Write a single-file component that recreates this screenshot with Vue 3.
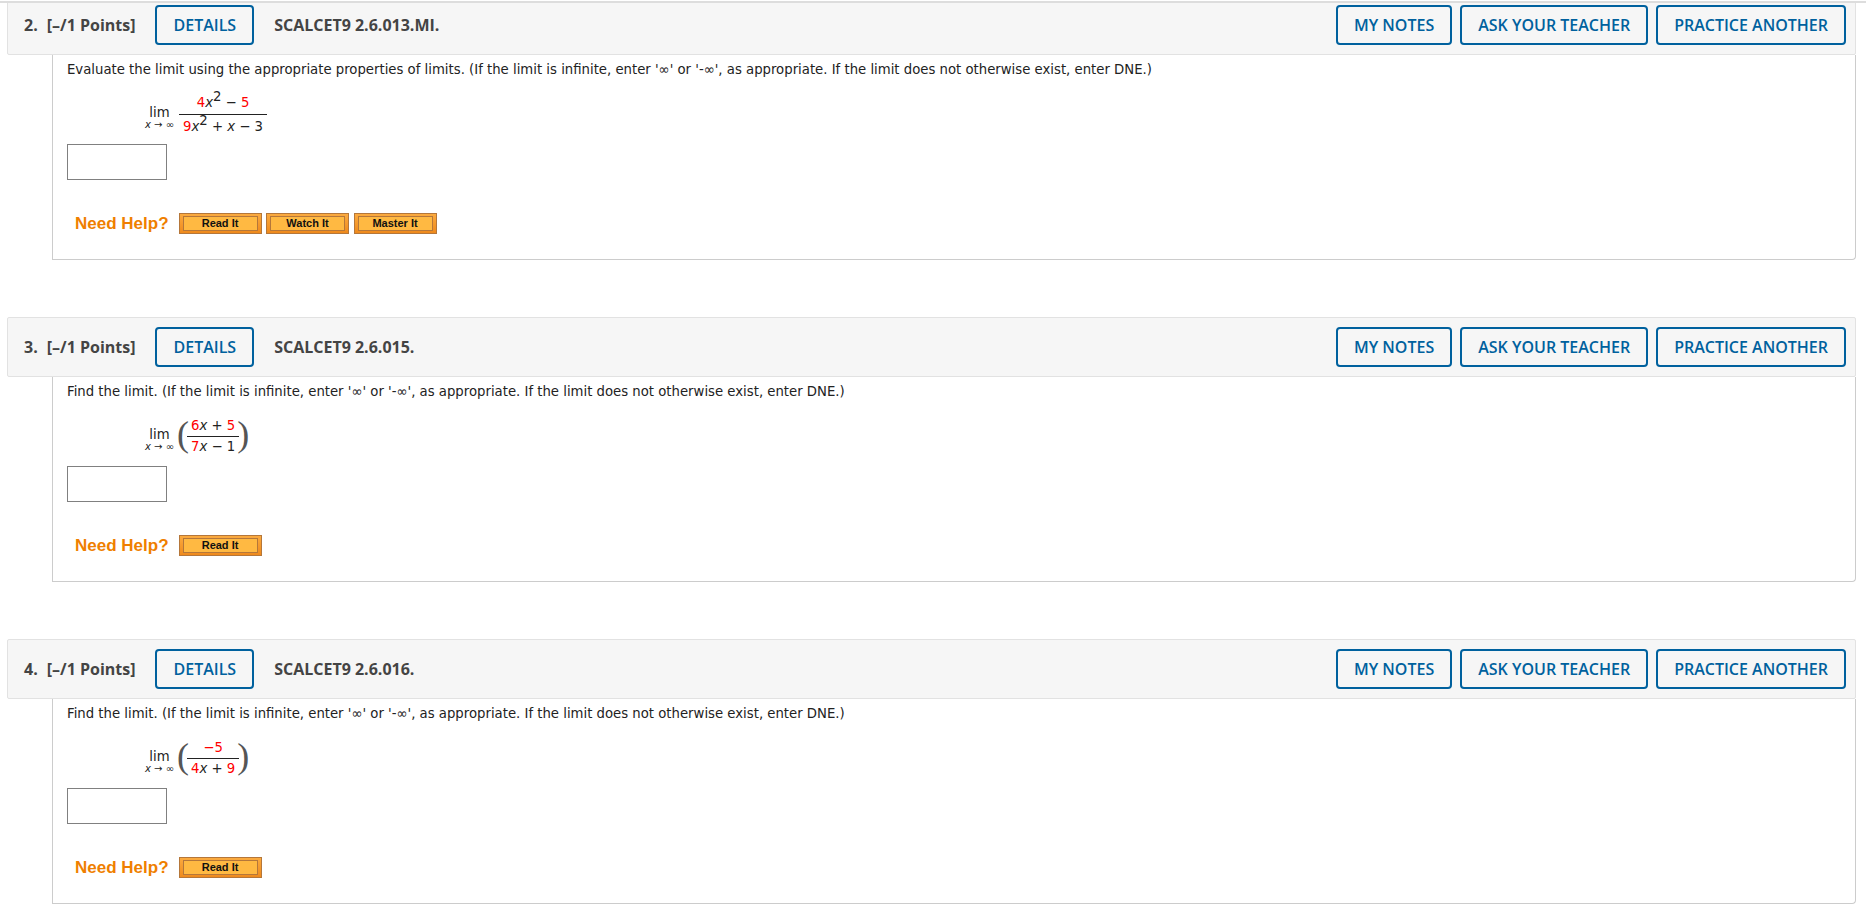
<template>
  <div class="page">
    <div class="scroller">
      <section v-for="q in questions" :key="q.num" class="question">
        <header class="q-head">
          <span class="q-num">{{ q.num }}.</span>
          <span class="q-points">[–/1 Points]</span>
          <button class="outline details">DETAILS</button>
          <span class="q-code">{{ q.code }}</span>
          <div class="q-actions">
            <button class="outline">MY NOTES</button>
            <button class="outline">ASK YOUR TEACHER</button>
            <button class="outline">PRACTICE ANOTHER</button>
          </div>
        </header>
        <div class="q-body">
          <p class="prompt">{{ q.prompt }}</p>
          <div class="math">
            <div class="lim">
              <span class="lim-word">lim</span>
              <span class="lim-sub"><i>x</i> → ∞</span>
            </div>
            <span v-if="q.parens" class="paren">(</span>
            <div class="frac" :class="{ wide: !q.parens }">
              <div class="top">
                <template v-for="(t, i) in q.top" :key="i">
                  <sup v-if="t.sup">{{ t.text }}</sup>
                  <i v-else-if="t.it">{{ t.text }}</i>
                  <span v-else :class="{ red: t.red }">{{ t.text }}</span>
                </template>
              </div>
              <div class="bottom">
                <template v-for="(t, i) in q.bottom" :key="i">
                  <sup v-if="t.sup">{{ t.text }}</sup>
                  <i v-else-if="t.it">{{ t.text }}</i>
                  <span v-else :class="{ red: t.red }">{{ t.text }}</span>
                </template>
              </div>
            </div>
            <span v-if="q.parens" class="paren">)</span>
          </div>
          <input class="answer" type="text" />
          <div class="help">
            <span class="help-label">Need Help?</span>
            <a v-for="h in q.help" :key="h" class="help-btn"><span>{{ h }}</span></a>
          </div>
        </div>
      </section>
    </div>
  </div>
</template>

<script setup>
const infNote = "(If the limit is infinite, enter '∞' or '-∞', as appropriate. If the limit does not otherwise exist, enter DNE.)"

const r = (text) => ({ text, red: true })
const n = (text) => ({ text })
const x = { text: 'x', it: true }
const sq = { text: '2', sup: true }

const questions = [
  {
    num: 2,
    code: 'SCALCET9 2.6.013.MI.',
    prompt: 'Evaluate the limit using the appropriate properties of limits. ' + infNote,
    parens: false,
    top: [r('4'), x, sq, n(' − '), r('5')],
    bottom: [r('9'), x, sq, n(' + '), x, n(' − 3')],
    help: ['Read It', 'Watch It', 'Master It']
  },
  {
    num: 3,
    code: 'SCALCET9 2.6.015.',
    prompt: 'Find the limit. ' + infNote,
    parens: true,
    top: [r('6'), x, n(' + '), r('5')],
    bottom: [r('7'), x, n(' − 1')],
    help: ['Read It']
  },
  {
    num: 4,
    code: 'SCALCET9 2.6.016.',
    prompt: 'Find the limit. ' + infNote,
    parens: true,
    top: [r('−5')],
    bottom: [r('4'), x, n(' + '), r('9')],
    help: ['Read It']
  }
]
</script>

<style>
html, body { margin: 0; background: #fff; overflow: hidden; }
</style>

<style scoped>
.page { padding-top: 1px; }
.scroller {
  height: 901px;
  overflow: hidden;
  border-top: 2px solid #ddd;
}
.question { margin-bottom: 57px; }
.question:first-child { margin-top: -8px; }
.q-head {
  display: flex;
  align-items: center;
  height: 60px;
  margin: 0 10px 0 7px;
  padding: 0 9px 0 16px;
  background: #f6f6f6;
  border: 1px solid #e2e2e2;
  border-radius: 2px;
  box-sizing: border-box;
  font-family: "Open Sans", sans-serif;
  font-size: 16px;
  color: #444;
}
.q-num { font-weight: 700; margin-right: 9px; }
.q-points { font-weight: 700; margin-right: 20px; }
.q-code { font-weight: 700; margin-left: 20px; }
.q-actions { margin-left: auto; display: flex; gap: 8px; }
.outline {
  height: 40px;
  padding: 0 16px;
  background: transparent;
  border: 2px solid #00619e;
  border-radius: 4px;
  color: #00619e;
  font-family: "Open Sans", sans-serif;
  font-size: 16px;
  font-weight: 600;
}
.q-body {
  margin: 0 10px 0 52px;
  height: 205px;
  padding: 0 0 0 14px;
  border: 1px solid #ccc;
  border-top: 0;
  border-radius: 0 0 4px 0;
  box-sizing: border-box;
  font-family: "DejaVu Sans", Verdana, sans-serif;
  font-size: 13.25px;
  color: #222;
}
.prompt { margin: 0; padding-top: 7px; line-height: 16px; }
.math {
  display: flex;
  align-items: center;
  margin: 12px 0 0 78px;
  height: 48px;
}
.lim {
  display: flex;
  flex-direction: column;
  align-items: center;
  margin: 9px 5px 0 0;
}
.lim-word { line-height: 12px; }
.lim-sub { font-size: 10px; line-height: 12px; }
.frac { text-align: center; }
.top { padding: 0 4px 1px; border-bottom: 1px solid #222; line-height: 18px; white-space: pre; }
.bottom { padding: 1px 4px 0; line-height: 18px; white-space: pre; }
.frac.wide { min-width: 84px; margin-top: 2px; }
.frac.wide .top { padding-bottom: 2px; }
.frac.wide .bottom { padding-top: 3px; }
.red { color: #f00; }
.paren {
  font-family: "Liberation Serif", serif;
  font-size: 36px;
  line-height: 44px;
  color: #555;
  margin: -4px -2px 0;
}
sup { font-size: 13.25px; line-height: 0; vertical-align: 6px; }
.answer {
  display: block;
  width: 100px;
  height: 36px;
  margin-top: 6px;
  padding: 0;
  border: 1px solid #808080;
  box-sizing: border-box;
  background: #fff;
}
.help { display: flex; align-items: center; margin: 33px 0 0 8px; }
.help-label {
  font-family: "Liberation Sans", Arial, sans-serif;
  font-size: 17px;
  font-weight: 700;
  line-height: 21px;
  color: #ef7f00;
  margin-right: 10px;
}
.help-btn {
  display: block;
  width: 83px;
  height: 21px;
  margin-right: 4.5px;
  padding: 2px 3px;
  box-sizing: border-box;
  background: linear-gradient(#fbaa3f, #ef8a1c);
  border: 1px solid #b5773a;
}
.help-btn span {
  display: block;
  height: 100%;
  box-sizing: border-box;
  border: 1px solid #b5773a;
  background: #ffb942;
  text-align: center;
  font-family: "Liberation Sans", Arial, sans-serif;
  font-size: 11px;
  font-weight: 700;
  line-height: 13px;
  color: #111;
}
</style>
